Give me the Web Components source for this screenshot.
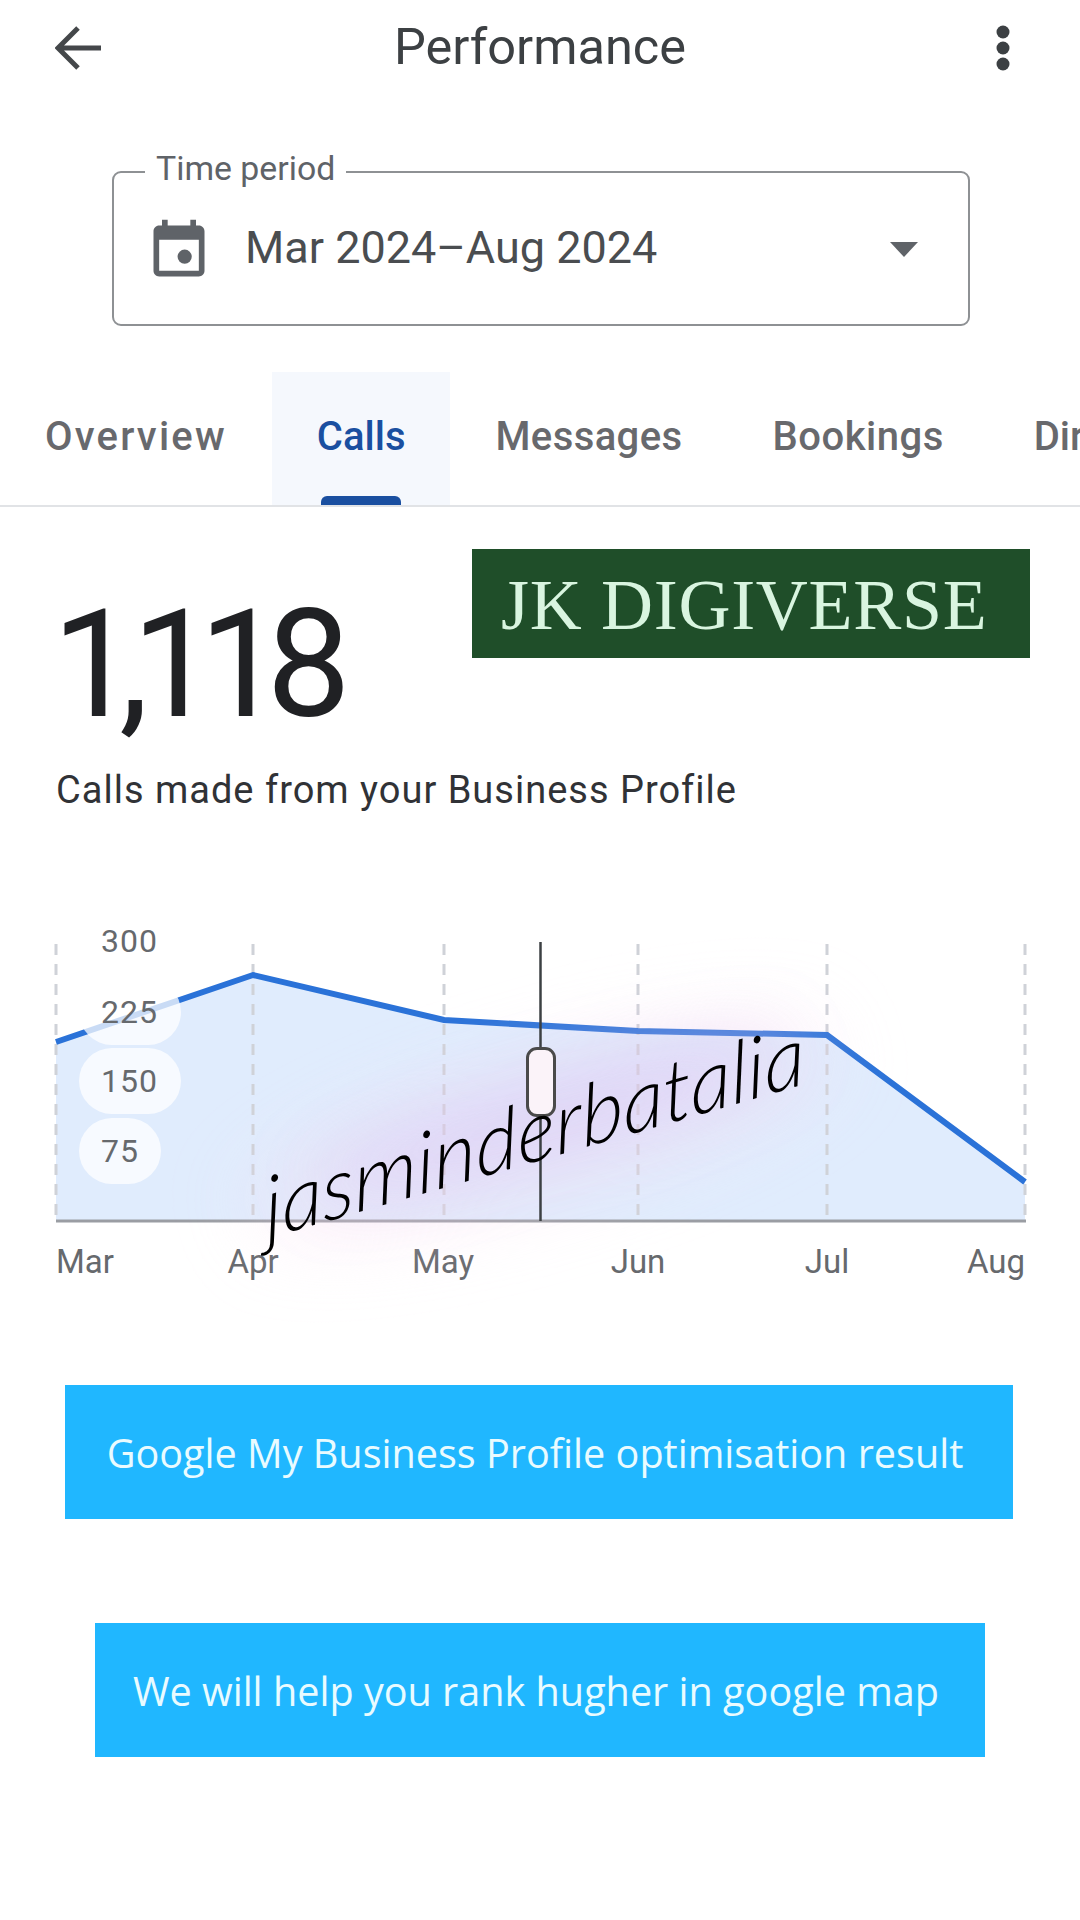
<!DOCTYPE html>
<html lang="en">
<head>
<meta charset="utf-8">
<title>Performance</title>
<style>
  html, body { margin: 0; background: #fff; }
  body { width: 1080px; height: 1920px; overflow: hidden; font-family: Roboto, "Liberation Sans", sans-serif; }
</style>
</head>
<body>
<perf-header>Performance</perf-header>
<period-field label="Time period">Mar 2024–Aug 2024</period-field>
<tab-strip>
  <tab-item style="letter-spacing:2.2px">Overview</tab-item>
  <tab-item active>Calls</tab-item>
  <tab-item style="letter-spacing:.4px">Messages</tab-item>
  <tab-item style="letter-spacing:.5px">Bookings</tab-item>
  <tab-item>Directions</tab-item>
</tab-strip>
<stat-block value="1,118" caption="Calls made from your Business Profile">JK DIGIVERSE</stat-block>
<calls-chart></calls-chart>
<promo-banner style="margin:0 67px 0 65px">Google My Business Profile optimisation result</promo-banner>
<promo-banner style="margin:104px 95px 0 95px">We will help you rank hugher in google map</promo-banner>

<script>
class PerfHeader extends HTMLElement {
  connectedCallback() {
    this.attachShadow({ mode: 'open' });
    this.shadowRoot.innerHTML = `
      <style>
        :host {
          display: grid;
          grid-template-columns: 1fr auto 1fr;
          align-items: center;
          height: 96px;
          padding: 0 70px 0 55px;
          color: #3c4043;
        }
        .title { font-size: 50.5px; line-height: 90px; padding: 0 0 2px 15px; }
        svg { display: block; }
        .more { justify-self: end; }
      </style>
      <svg width="46" height="44" viewBox="0 0 46 44" fill="none" stroke="#44474a" stroke-width="5">
        <path d="M46 22H4M23 2 3 22l20 20"/>
      </svg>
      <div class="title"><slot></slot></div>
      <svg class="more" width="14" height="46" viewBox="0 0 14 46" fill="#3c4043">
        <circle cx="7" cy="7" r="6.5"/><circle cx="7" cy="23" r="6.5"/><circle cx="7" cy="39" r="6.5"/>
      </svg>
    `;
  }
}

class PeriodField extends HTMLElement {
  connectedCallback() {
    this.attachShadow({ mode: 'open' });
    this.shadowRoot.innerHTML = `
      <style>
        :host {
          display: flex;
          align-items: center;
          box-sizing: border-box;
          position: relative;
          height: 155px;
          margin: 75px 110px 0 112px;
          padding: 0 50px 4px 34px;
          border: 2px solid #8e9194;
          border-radius: 9px;
          color: #4a4d50;
        }
        .label {
          position: absolute;
          left: 31px;
          top: -26px;
          padding: 0 11px;
          background: #fff;
          font-size: 33.8px;
          line-height: 44px;
          color: #5f6368;
        }
        .value { flex: 1; font-size: 45px; margin-left: 32px; padding-top: 1px; }
        svg { display: block; flex: none; margin: 8px 0 0 -3px; }
        .caret { width: 0; height: 0; margin-top: 6px; border: 14px solid transparent; border-top: 15px solid #5f6368; border-bottom: 0; }
      </style>
      <span class="label">${this.getAttribute('label')}</span>
      <svg width="68" height="68" viewBox="0 0 24 24" fill="#5f6368">
        <path d="M19 3h-1V1h-2v2H8V1H6v2H5c-1.1 0-2 .9-2 2v14c0 1.1.9 2 2 2h14c1.1 0 2-.9 2-2V5c0-1.1-.9-2-2-2zm0 16H5V8h14v11z"/>
        <circle cx="14" cy="14" r="2.5"/>
      </svg>
      <div class="value"><slot></slot></div>
      <div class="caret"></div>
    `;
  }
}

class TabStrip extends HTMLElement {
  connectedCallback() {
    this.attachShadow({ mode: 'open' });
    this.shadowRoot.innerHTML = `
      <style>
        :host {
          display: flex;
          height: 135px;
          margin-top: 46px;
          box-sizing: border-box;
          border-bottom: 2px solid #e1e3e6;
          overflow: hidden;
        }
      </style>
      <slot></slot>
    `;
  }
}

class TabItem extends HTMLElement {
  connectedCallback() {
    this.attachShadow({ mode: 'open' });
    this.shadowRoot.innerHTML = `
      <style>
        :host {
          display: block;
          flex: none;
          position: relative;
          padding: 41px 45px 0;
          font-size: 40px;
          font-weight: 500;
          line-height: 48px;
          color: #68696d;
        }
        :host([active]) { background: #f5f8fd; color: #1a4fa0; }
        .bar { display: none; }
        :host([active]) .bar {
          display: block;
          position: absolute;
          left: 50%;
          width: 80px;
          margin-left: -40px;
          bottom: 0;
          height: 9px;
          border-radius: 6px 6px 0 0;
          background: #1a4fa0;
        }
      </style>
      <slot></slot><div class="bar"></div>
    `;
  }
}

class StatBlock extends HTMLElement {
  connectedCallback() {
    this.attachShadow({ mode: 'open' });
    this.shadowRoot.innerHTML = `
      <style>
        :host { display: block; height: 413px; box-sizing: border-box; padding: 0 50px 0 56px; }
        .top { display: flex; justify-content: space-between; align-items: flex-start; height: 250px; }
        .value { font-size: 150px; line-height: 180px; margin: 68px 0 0 -4px; color: #202124; letter-spacing: -17px; }
        .badge {
          display: flex;
          align-items: center;
          box-sizing: border-box;
          width: 558px;
          height: 109px;
          margin-top: 42px;
          padding: 3px 0 0 29px;
          background: #1f4e29;
          color: #d9f5e0;
          font-family: "Liberation Serif", serif;
          font-size: 72px;
          letter-spacing: .7px;
        }
        .caption { font-size: 38px; letter-spacing: 1px; line-height: 48px; margin-top: 9px; color: #303236; }
      </style>
      <div class="top">
        <div class="value">${this.getAttribute('value')}</div>
        <div class="badge"><slot></slot></div>
      </div>
      <div class="caption">${this.getAttribute('caption')}</div>
    `;
  }
}

class CallsChart extends HTMLElement {
  connectedCallback() {
    const grid = [56, 253, 444, 638, 827, 1025];
    const line = '56,1042 253,975 444,1020 638,1031 827,1035 1025,1182';
    const pills = [[79, 979, 102], [79, 1048, 102], [79, 1118, 82]];
    const ticks = [['300', 101, 952], ['225', 101, 1023], ['150', 101, 1092], ['75', 101, 1162]];
    const months = [['Mar', 56, 'start'], ['Apr', 253, 'middle'], ['May', 443, 'middle'], ['Jun', 638, 'middle'], ['Jul', 827, 'middle'], ['Aug', 1025, 'end']];
    this.attachShadow({ mode: 'open' });
    this.shadowRoot.innerHTML = `
      <style>
        :host { display: block; position: relative; height: 465px; overflow: visible; }
        svg { display: block; position: absolute; left: 0; top: 0; overflow: visible; }
        text { font-family: Roboto, sans-serif; font-size: 33px; fill: #66696d; }
        text.tick { font-size: 32px; letter-spacing: 1px; }
        .sign {
          position: absolute;
          left: 268px;
          top: 237px;
          font-family: Lato, sans-serif;
          font-style: italic;
          font-weight: 300;
          font-size: 84px;
          line-height: 100px;
          color: #000;
          white-space: nowrap;
          transform: rotate(-16deg) skewX(-12deg);
          transform-origin: 0 100%;
        }
        .glow {
          position: absolute;
          border-radius: 50%;
          transform: rotate(-16deg);
        }
        .glow.outer {
          left: 240px;
          top: 145px;
          width: 600px;
          height: 130px;
          background: rgba(250, 215, 240, .38);
          filter: blur(40px);
        }
        .glow.inner {
          left: 300px;
          top: 165px;
          width: 500px;
          height: 60px;
          background: rgba(180, 150, 235, .26);
          filter: blur(36px);
        }
        .handle {
          position: absolute;
          left: 526px;
          top: 127px;
          box-sizing: border-box;
          width: 30px;
          height: 70px;
          border: 3px solid #4a4a4a;
          border-radius: 11px;
          background: #fbf3f9;
        }
      </style>
      <svg width="1080" height="465" viewBox="0 920 1080 465">
        <polygon points="${line} 1025,1221 56,1221" fill="#e0ecfd"/>
        ${grid.map(x => `<line x1="${x}" x2="${x}" y1="944" y2="1221" stroke="#cfd2d8" stroke-width="3" stroke-dasharray="11 9"/>`).join('')}
        <polyline points="${line}" fill="none" stroke="#2a72d8" stroke-width="6"/>
        ${pills.map(([x, y, w]) => `<rect x="${x}" y="${y}" width="${w}" height="66" rx="33" fill="#fff" fill-opacity=".75"/>`).join('')}
        ${ticks.map(([t, x, y]) => `<text class="tick" x="${x}" y="${y}">${t}</text>`).join('')}
        ${months.map(([t, x, a]) => `<text x="${x}" y="1273" text-anchor="${a}">${t}</text>`).join('')}
        <line x1="56" x2="1026" y1="1221" y2="1221" stroke="#9a9da3" stroke-width="3"/>
      </svg>
      <div class="glow outer"></div>
      <div class="glow inner"></div>
      <svg width="1080" height="465" viewBox="0 920 1080 465">
        <line x1="540.5" x2="540.5" y1="942" y2="1221" stroke="#3c4043" stroke-width="2.5"/>
      </svg>
      <div class="handle"></div>
      <div class="sign">jasminderbatalia</div>
    `;
  }
}

class PromoBanner extends HTMLElement {
  connectedCallback() {
    this.attachShadow({ mode: 'open' });
    this.shadowRoot.innerHTML = `
      <style>
        :host {
          display: flex;
          align-items: center;
          justify-content: center;
          height: 134px;
          box-sizing: border-box;
          padding: 2px 8px 0 0;
          background: #20b7ff;
          color: #e9fbff;
          font-family: "Open Sans", sans-serif;
          font-size: 39.6px;
          font-weight: 400;
        }
      </style>
      <slot></slot>
    `;
  }
}

customElements.define('perf-header', PerfHeader);
customElements.define('period-field', PeriodField);
customElements.define('tab-strip', TabStrip);
customElements.define('tab-item', TabItem);
customElements.define('stat-block', StatBlock);
customElements.define('calls-chart', CallsChart);
customElements.define('promo-banner', PromoBanner);
</script>
</body>
</html>
